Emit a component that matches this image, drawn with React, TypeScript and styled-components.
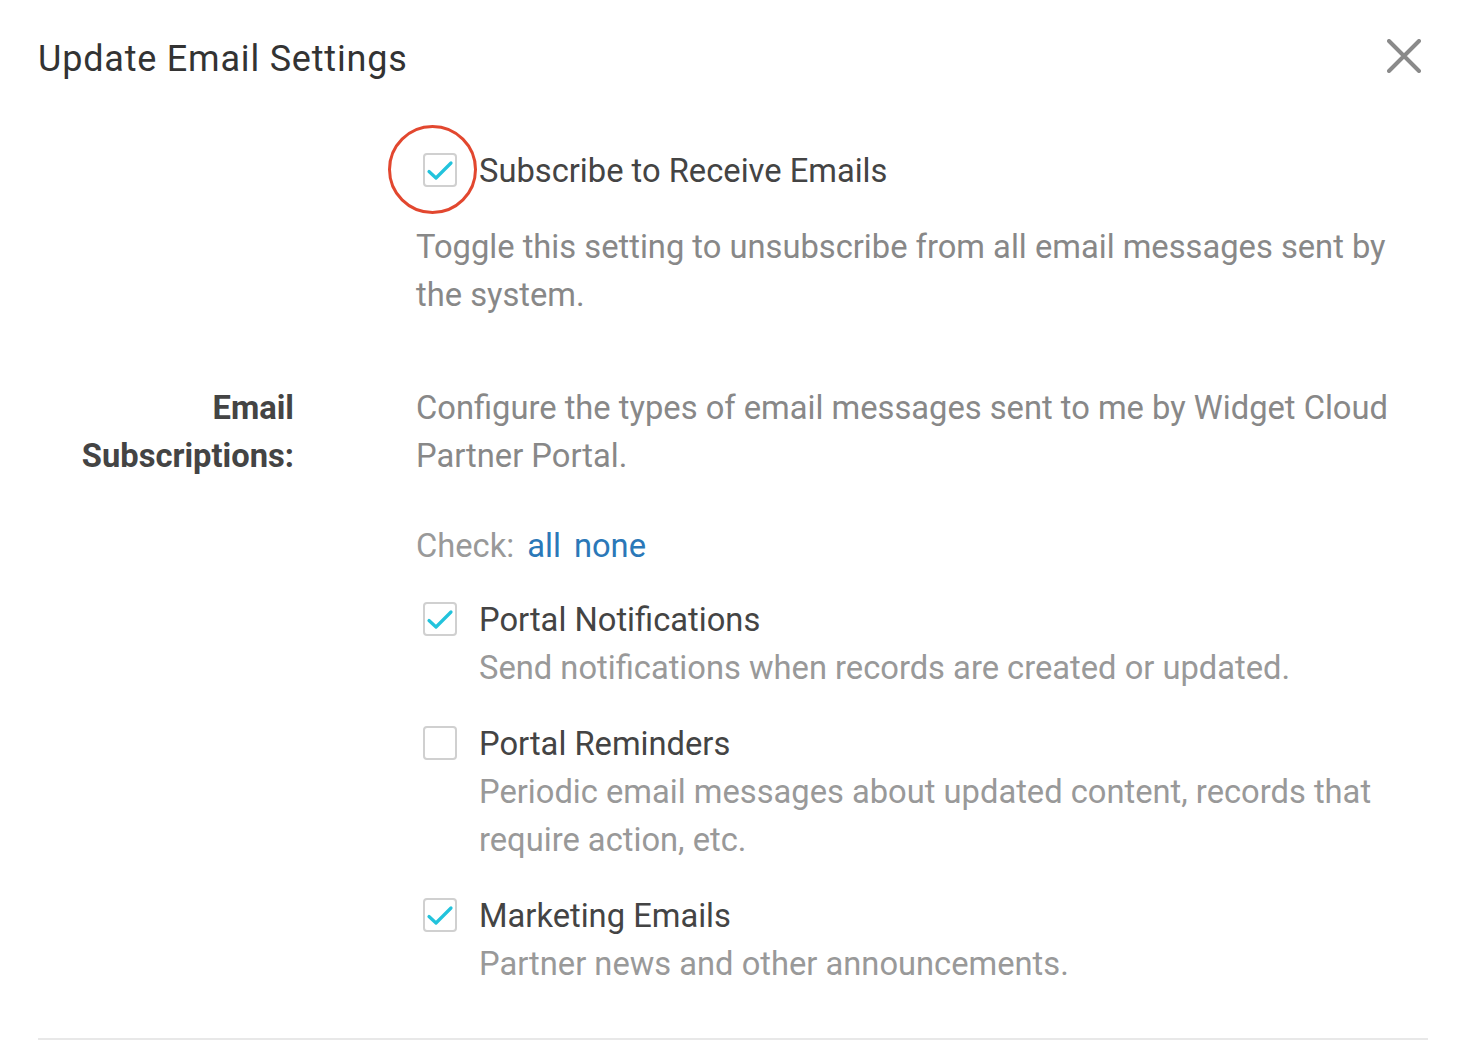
import React from "react";
import styled, { createGlobalStyle } from "styled-components";

const Global = createGlobalStyle`
  html, body { margin: 0; padding: 0; background: #ffffff; }
  body { font-family: Roboto, "Liberation Sans", Arial, sans-serif; -webkit-font-smoothing: antialiased; }
  * { box-sizing: border-box; }
`;

const Modal = styled.div`
  width: 1470px;
  padding: 39px 42px 0 38px;
  background: #fff;
`;

const Header = styled.div`
  display: flex;
  align-items: center;
  justify-content: space-between;
  height: 40px;
`;

const Title = styled.h1`
  margin: 0;
  font-size: 36px;
  letter-spacing: 0.8px;
  line-height: 40px;
  font-weight: 400;
  color: #333;
`;

const CloseButton = styled.button`
  border: none;
  background: none;
  padding: 0;
  width: 34px;
  height: 34px;
  margin-top: -6px;
  margin-right: 7px;
  display: flex;
  align-items: center;
  justify-content: center;
  cursor: pointer;
`;

const Body = styled.div`
  display: grid;
  grid-template-columns: 256px 1fr;
  column-gap: 122px;
  margin-top: 68px;
  font-size: 32.7px;
  line-height: 48px;
`;

const LabelCell = styled.div`
  text-align: right;
  font-weight: 700;
  color: #444;
  margin-top: 65px;
`;

const Content = styled.div<{ $mt?: number }>`
  display: flex;
  flex-direction: column;
  margin-top: ${(p) => p.$mt ?? 0}px;
`;

const SubscribeRow = styled.label`
  position: relative;
  display: flex;
  align-items: flex-start;
  gap: 22px;
  padding-left: 7px;
  color: #444;
`;

const Highlight = styled.span`
  position: absolute;
  left: -28px;
  top: -22px;
  width: 89px;
  height: 89px;
  border: 3px solid #e2472f;
  border-radius: 50%;
  pointer-events: none;
`;

const Help = styled.p<{ $mt?: number }>`
  margin: ${(p) => p.$mt ?? 0}px 0 0;
  color: #888;
`;

const CheckLine = styled.div`
  margin-top: 42px;
  color: #999;
  display: flex;
  gap: 13px;
`;

const Links = styled.span`
  display: flex;
  gap: 13px;
`;

const Link = styled.a`
  color: #2b78b8;
  text-decoration: none;
  cursor: pointer;
`;

const List = styled.div`
  display: flex;
  flex-direction: column;
  gap: 28px;
  margin-top: 26px;
`;

const Item = styled.div`
  display: grid;
  grid-template-columns: 34px 1fr;
  column-gap: 22px;
  padding-left: 7px;
`;

const Box = styled.span`
  width: 34px;
  height: 34px;
  margin-top: 6px;
  border: 2px solid #d0d0d0;
  border-radius: 4px;
  background: #fff;
  display: flex;
  align-items: center;
  justify-content: center;
  flex-shrink: 0;
`;

const ItemTitle = styled.div`
  color: #444;
`;

const ItemDesc = styled.div`
  color: #999;
`;

const Divider = styled.hr`
  border: none;
  border-top: 2px solid #e8e8e8;
  margin: 50px 0 0;
`;

const Check = ({ checked }: { checked: boolean }) => (
  <Box>
    {checked && (
      <svg width="28" height="24" viewBox="0 0 28 24">
        <path d="M3 13.5 L10 20 L25 5" fill="none" stroke="#22c3dc" strokeWidth="3.2" strokeLinecap="round" strokeLinejoin="round" />
      </svg>
    )}
  </Box>
);

const items = [
  { title: "Portal Notifications", desc: "Send notifications when records are created or updated.", checked: true },
  { title: "Portal Reminders", desc: "Periodic email messages about updated content, records that require action, etc.", checked: false },
  { title: "Marketing Emails", desc: "Partner news and other announcements.", checked: true },
];

export default function App() {
  return (
    <>
      <Global />
      <Modal>
        <Header>
          <Title>Update Email Settings</Title>
          <CloseButton aria-label="Close">
            <svg width="34" height="34" viewBox="0 0 34 34">
              <path d="M2 2 L32 32 M32 2 L2 32" stroke="#8a8a8a" strokeWidth="4" strokeLinecap="round" />
            </svg>
          </CloseButton>
        </Header>
        <Body>
          <div />
          <Content>
            <SubscribeRow>
              <Highlight />
              <Check checked={true} />
              <span>Subscribe to Receive Emails</span>
            </SubscribeRow>
            <Help $mt={28}>Toggle this setting to unsubscribe from all email messages sent by the system.</Help>
          </Content>
          <LabelCell>Email Subscriptions:</LabelCell>
          <Content $mt={65}>
            <Help>Configure the types of email messages sent to me by Widget Cloud Partner Portal.</Help>
            <CheckLine>
              <span>Check:</span>
              <Links>
                <Link>all</Link>
                <Link>none</Link>
              </Links>
            </CheckLine>
            <List>
              {items.map((it) => (
                <Item key={it.title}>
                  <Check checked={it.checked} />
                  <div>
                    <ItemTitle>{it.title}</ItemTitle>
                    <ItemDesc>{it.desc}</ItemDesc>
                  </div>
                </Item>
              ))}
            </List>
          </Content>
        </Body>
        <Divider />
      </Modal>
    </>
  );
}
